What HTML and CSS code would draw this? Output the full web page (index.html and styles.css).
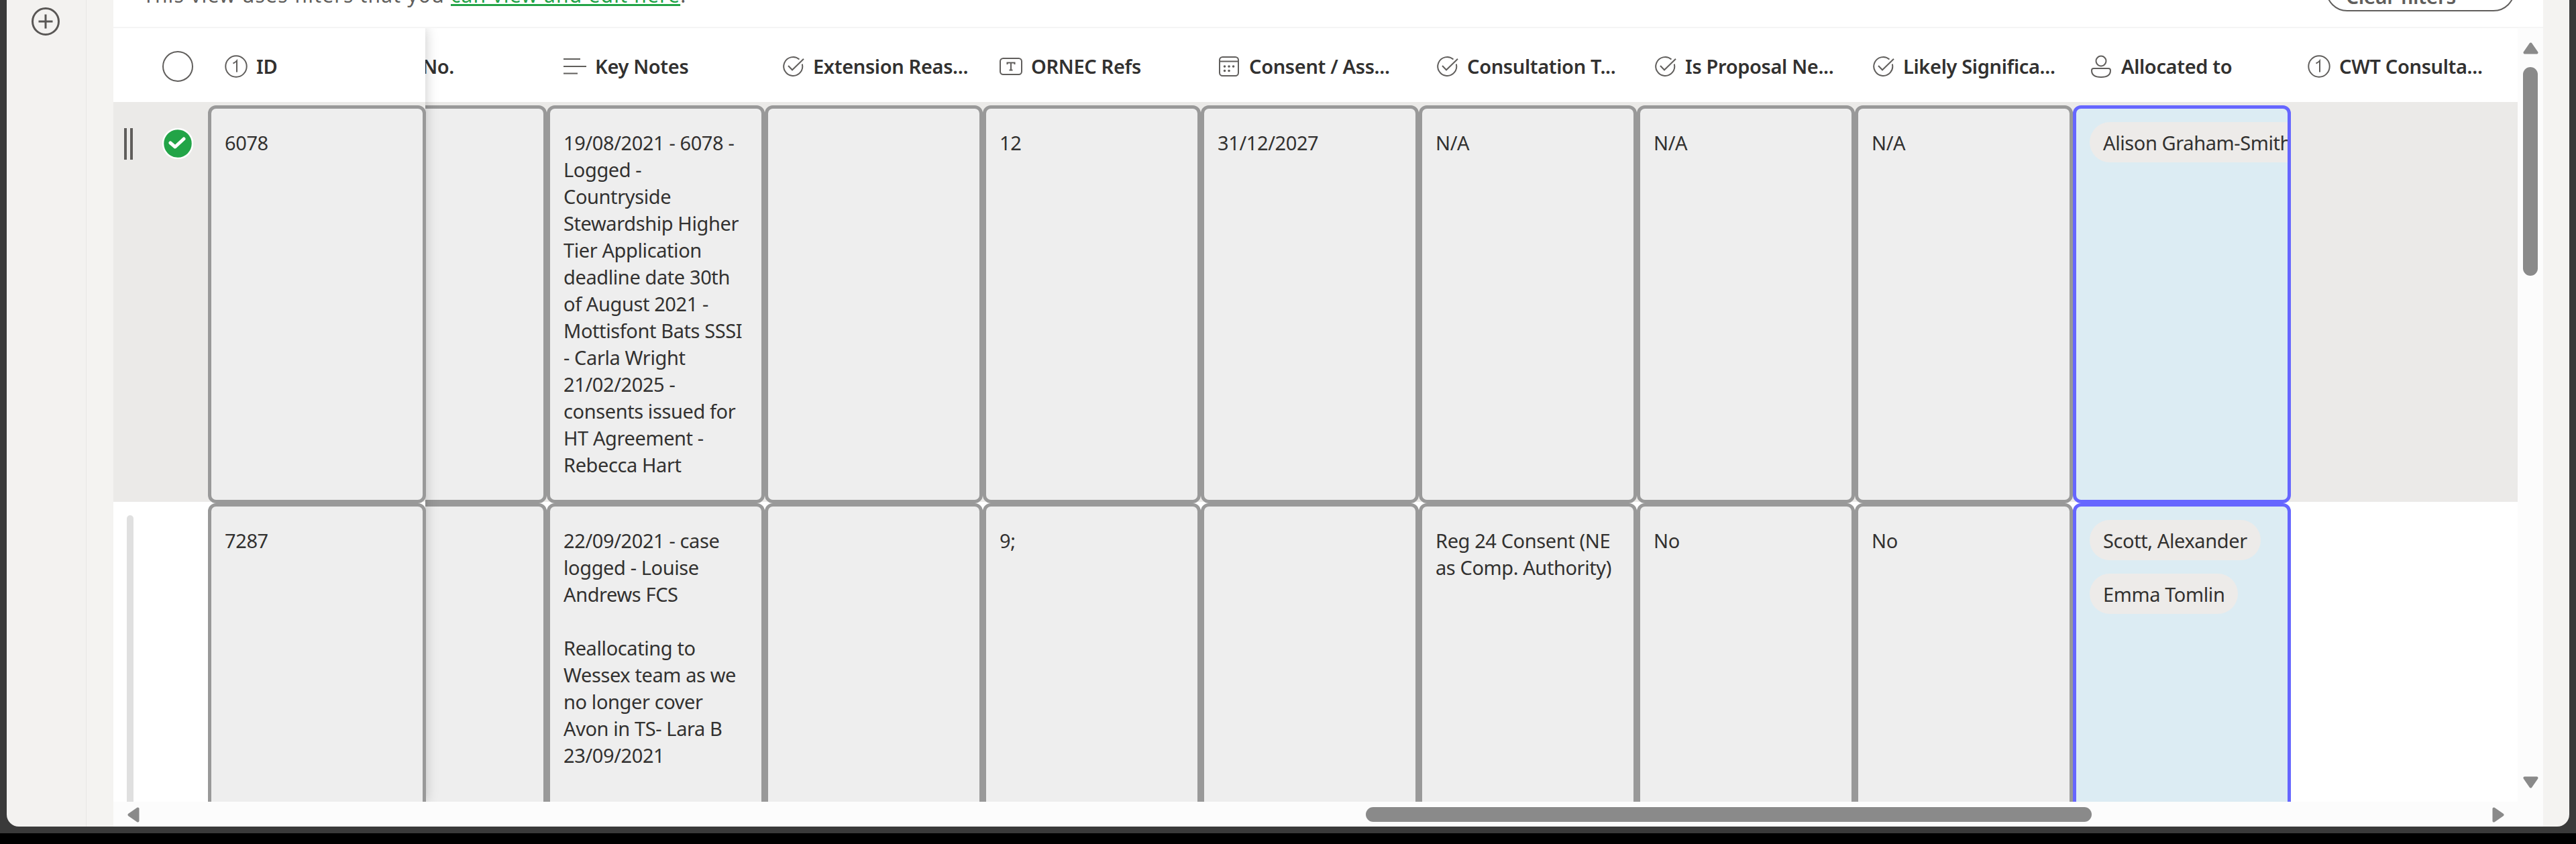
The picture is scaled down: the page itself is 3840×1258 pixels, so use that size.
FILE: index.html
```html
<!DOCTYPE html>
<html lang="en"><head><meta charset="utf-8"><title>List view</title><link rel="stylesheet" href="styles.css"></head>
<body>
<svg class="defs"><defs>
<symbol id="num" viewBox="0 0 34 34"><circle cx="17" cy="17" r="15.7"/><path d="M12.500 12.500Q16 11 18 8.500V25.500"/></symbol>
<symbol id="lines" viewBox="0 0 34 34"><path d="M0 6H25M0 17H34M0 27.500H21"/></symbol>
<symbol id="check" viewBox="0 0 34 34"><path d="M26.500 6.500A14 14 0 1 0 30.800 13.500M10 16L16 22.300L33 5.700"/></symbol>
<symbol id="text" viewBox="0 0 34 34"><rect x="1" y="5" width="32" height="24" rx="4.500"/><path d="M11.500 14V11.500H22.500V14M17 11.500V22.500M14.500 22.500H19.500"/></symbol>
<symbol id="cal" viewBox="0 0 34 34"><rect x="3" y="3" width="28" height="28" rx="4.500"/><path d="M3 9.500H31"/><path class="dots" d="M10.500 17H10.600M17 17H17.100M23.500 17H23.600M10.500 23.500H10.600M17 23.500H17.100"/></symbol>
<symbol id="person" viewBox="0 0 34 34"><circle cx="17" cy="9" r="7.500"/><path d="M6 20H28Q31 20 31 23C31 30 25 33 17 33S3 30 3 23Q3 20 6 20Z"/></symbol>
</defs></svg>
<div class="window">
<aside class="rail"><svg class="add" viewBox="0 0 44 44"><circle cx="22" cy="22" r="19.500"/><path d="M22 11.500V32.500M11.500 22H32.500"/></svg></aside>
<main class="panel">
<div class="notice"><p class="msg">This view uses filters that you <a class="link">can view and edit here</a>.</p><button class="clear">Clear filters</button></div>
<div class="list"><div class="grid">
<section class="pinned">
<div class="head"><span class="pick"></span><div class="hcell"><svg class="ico"><use href="#num"/></svg><b>ID</b></div></div>
<div class="row first sel"><div class="side"><i class="grip"></i><svg class="tick" viewBox="0 0 46 46"><circle cx="23" cy="23" r="22"/><path d="M12 22L19 28L32 16"/></svg></div><div class="cell">6078</div></div>
<div class="row second"><div class="side"><i class="bar"></i></div><div class="cell">7287</div></div>
</section>
<section class="scroll"><div class="cols">
<div class="head"><div class="hcell"><b class="no">Case No.</b></div><div class="hcell"><svg class="ico"><use href="#lines"/></svg><b>Key Notes</b></div><div class="hcell"><svg class="ico"><use href="#check"/></svg><b>Extension Reas...</b></div><div class="hcell"><svg class="ico"><use href="#text"/></svg><b>ORNEC Refs</b></div><div class="hcell"><svg class="ico"><use href="#cal"/></svg><b>Consent / Ass...</b></div><div class="hcell"><svg class="ico"><use href="#check"/></svg><b>Consultation T...</b></div><div class="hcell"><svg class="ico"><use href="#check"/></svg><b>Is Proposal Ne...</b></div><div class="hcell"><svg class="ico"><use href="#check"/></svg><b>Likely Significa...</b></div><div class="hcell"><svg class="ico"><use href="#person"/></svg><b>Allocated to</b></div><div class="hcell"><svg class="ico"><use href="#num"/></svg><b>CWT Consulta...</b></div></div>
<div class="row first sel"><div class="cell"></div><div class="cell">19/08/2021 - 6078 -<br>Logged -<br>Countryside<br>Stewardship Higher<br>Tier Application<br>deadline date 30th<br>of August 2021 -<br>Mottisfont Bats SSSI<br>- Carla Wright<br>21/02/2025 -<br>consents issued for<br>HT Agreement -<br>Rebecca Hart</div><div class="cell"></div><div class="cell">12</div><div class="cell">31/12/2027</div><div class="cell">N/A</div><div class="cell">N/A</div><div class="cell">N/A</div><div class="cell who"><span class="chip">Alison Graham-Smith</span></div><div class="blank"></div></div>
<div class="row second"><div class="cell"></div><div class="cell">22/09/2021 - case<br>logged - Louise<br>Andrews FCS<br><br>Reallocating to<br>Wessex team as we<br>no longer cover<br>Avon in TS- Lara B<br>23/09/2021<br><br><span class="next">a/l</span></div><div class="cell"></div><div class="cell">9;</div><div class="cell"></div><div class="cell">Reg 24 Consent (NE<br>as Comp. Authority)</div><div class="cell">No</div><div class="cell">No</div><div class="cell who"><span class="chip">Scott, Alexander</span><span class="chip">Emma Tomlin</span></div><div class="blank"></div></div>
</div></section></div>
<div class="vbar"><svg class="up" viewBox="0 0 23 18"><path d="M11.500 2.500L20.500 15.500H2.500Z"/></svg><i class="vthumb"></i><svg class="down" viewBox="0 0 23 18"><path d="M2.500 2.500H20.500L11.500 15.500Z"/></svg></div></div>
<div class="hbar"><svg viewBox="0 0 18 23"><path d="M2.500 11.500L15.500 2.500V20.500Z"/></svg><i class="hthumb"></i><svg class="right" viewBox="0 0 18 23"><path d="M2.500 2.500L15.500 11.500L2.500 20.500Z"/></svg></div>
</main></div>
</body></html>
```
FILE: styles.css
```css
*{box-sizing:border-box}
body{margin:0;width:3840px;height:1258px;overflow:hidden;background:#000;font:29px/40px "Noto Sans","Open Sans",sans-serif;color:#323130;letter-spacing:-.4px}
.defs{position:absolute;width:0;height:0}
.window{width:3840px;height:1242px;border:solid #3a3a3a;border-width:0 10px 10px;background:#3a3a3a;display:flex}
.rail{width:119px;background:#f3f2f0;border-right:1px solid #e8e7e5;border-bottom-left-radius:18px;padding:10px 0 0 36px}
.add{width:44px;height:44px;fill:none;stroke:#595755;stroke-width:3;display:block}
.panel{flex:1;background:#fff;border:solid #f4f3f1;border-width:0 39px 0 40px;border-bottom-right-radius:18px;display:flex;flex-direction:column;overflow:hidden}
.notice{height:42px;flex:none;display:flex;justify-content:space-between;align-items:flex-end;overflow:hidden;border-bottom:2px solid #f5f5f5;padding:0 42px 23px 44px;color:#605e5c}
.msg{margin:0 0 4px;font-size:30px;line-height:40px;white-space:nowrap;letter-spacing:1.2px}
.link{color:#22a447;text-decoration:underline;text-decoration-thickness:3px;text-underline-offset:2px}
.clear{width:282px;height:64px;border:2.500px solid #605e5c;border-radius:32px;background:#fff;font:600 30px/36px "Noto Sans",sans-serif;letter-spacing:-.4px;color:#605e5c;flex:none;padding:19px 58px 0 0;white-space:nowrap}
.list{flex:1;min-height:0;display:flex}
.grid{flex:1;min-width:0;display:flex;overflow:hidden;height:1153px}
.pinned{width:465px;flex:none;position:relative;z-index:1;box-shadow:0 0 18px rgba(0,0,0,.22)}
.head{height:110px;display:flex;align-items:center;background:#fff;padding-top:4px}
.pick{width:46px;height:46px;border:2px solid #605e5c;border-radius:50%;margin:0 22px 0 73px;flex:none}
.hcell{width:325px;flex:none;padding-left:25px;display:flex;align-items:center;gap:13px;white-space:nowrap}
.hcell b{font-weight:600;letter-spacing:-.35px}
.hcell .no{width:162px;text-align:right}
.ico{width:34px;height:34px;flex:none;fill:none;stroke:#605e5c;stroke-width:2}
.dots{stroke-width:3.500;stroke-linecap:round}
.row{display:flex;background:#fff}
.first{height:598px;padding-top:5px}
.second{height:700px}
.sel{background:linear-gradient(#ebeae8 596px,#fff 596px)}
.side{width:141px;flex:none;display:flex}
.cell{width:325px;flex:none;border:5px solid #999;border-radius:12px;background:#eee;padding:31px 20px;white-space:nowrap;overflow:hidden}
.scroll{flex:1;overflow:hidden;min-width:0}
.cols{width:3263px;margin-left:-144px}
.blank{flex:1}
.who{border-color:#66f;background:#dcecf3;padding:20px 20px;display:flex;flex-direction:column;align-items:flex-start}
.chip{background:#edebe9;border-radius:30px;padding:11px 20px 9px;margin-bottom:20px;height:60px;flex:none}
.grip{width:13px;height:47px;border:solid #605e5c;border-width:0 4px;margin:34px 44px 0 16px}
.tick{width:46px;height:46px;margin-top:34px;fill:#22a447}
.tick circle{stroke:#fff;stroke-width:2.500}
.tick path{fill:none;stroke:#fff;stroke-width:5;stroke-linecap:round;stroke-linejoin:round}
.bar{width:10px;margin:18px 0 0 20px;background:#e0e0e0;border-radius:5px 5px 0 0}
.vbar{width:38px;background:#fcfcfc;display:flex;flex-direction:column;align-items:center;padding:21px 0 20px}
.vbar svg,.hbar svg{fill:#8a8a8a;stroke:#8a8a8a;stroke-width:4;stroke-linejoin:round;flex:none}
.up,.down{width:23px;height:18px}
.down{margin-top:auto}
.vthumb{width:22px;height:311px;background:#8a8a8a;border-radius:11px;margin-top:19px}
.hbar{height:37px;flex:none;background:#fcfcfc;display:flex;align-items:center;padding:1px 58px 0 21px}
.hbar svg{width:18px;height:23px}
.hthumb{width:1082px;height:22px;border-radius:11px;background:#8a8a8a;margin-left:1828px}
.hbar .right{margin-left:auto}
```
